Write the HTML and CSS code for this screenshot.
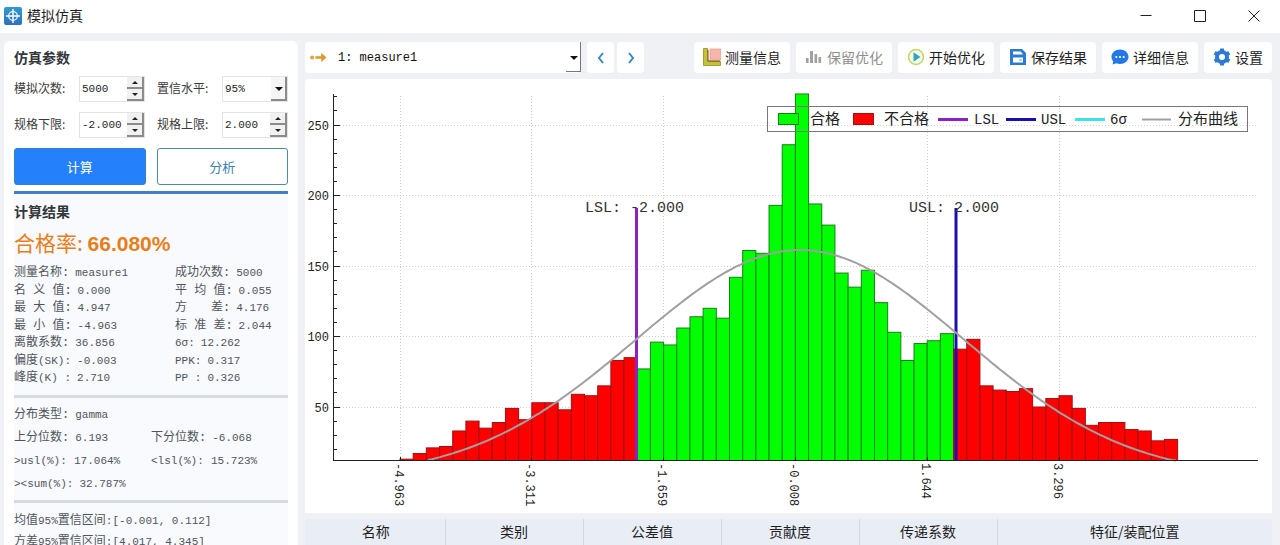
FILE: index.html
```html
<!DOCTYPE html>
<html lang="zh-CN">
<head>
<meta charset="utf-8">
<title>模拟仿真</title>
<link rel="stylesheet" href="styles.css">
</head>
<body>
<div class="app">
  <header class="titlebar">
    <svg class="logo" viewBox="0 0 18 18" aria-hidden="true">
      <defs><linearGradient id="lg" x1="0" y1="0" x2="0" y2="1"><stop offset="0" stop-color="#2f9bd0"/><stop offset="1" stop-color="#2f6fbe"/></linearGradient></defs>
      <rect width="18" height="18" rx="2" fill="url(#lg)"/>
      <circle cx="9" cy="9" r="4.3" fill="none" stroke="#e6f4ff" stroke-width="1.3"/>
      <path d="M9 2v14M2 9h14" stroke="#fff" stroke-width="1.4"/>
    </svg>
    <h1>模拟仿真</h1>
    <div class="window-buttons">
      <button aria-label="最小化"><svg viewBox="0 0 12 12"><path d="M.5 5.500h11"/></svg></button>
      <button aria-label="最大化"><svg viewBox="0 0 12 12"><path d="M.5.5h11v11H.5z"/></svg></button>
      <button aria-label="关闭"><svg viewBox="0 0 12 12"><path d="M.5.5l11 11M11.500.5l-11 11"/></svg></button>
    </div>
  </header>

  <div class="workspace">
    <aside class="sidebar">
      <h2>仿真参数</h2>
      <form class="params">
        <label for="runs">模拟次数:</label>
        <div class="spin"><input id="runs" type="text" value="5000"><div class="steps"><button type="button" class="up" aria-label="增加"></button><button type="button" class="down" aria-label="减少"></button></div></div>
        <label for="level">置信水平:</label>
        <div class="combo small"><select id="level"><option>95%</option></select></div>
        <label for="lower">规格下限:</label>
        <div class="spin"><input id="lower" type="text" value="-2.000"><div class="steps"><button type="button" class="up" aria-label="增加"></button><button type="button" class="down" aria-label="减少"></button></div></div>
        <label for="upper">规格上限:</label>
        <div class="spin"><input id="upper" type="text" value="2.000"><div class="steps"><button type="button" class="up" aria-label="增加"></button><button type="button" class="down" aria-label="减少"></button></div></div>
      </form>
      <div class="actions">
        <button class="primary">计算</button>
        <button class="outline">分析</button>
      </div>
      <section class="results">
        <h2>计算结果</h2>
        <p class="rate">合格率: <strong>66.080%</strong></p>
        <dl class="stats">
          <div><dt>测量名称:</dt><dd>measure1</dd></div><div><dt>成功次数:</dt><dd>5000</dd></div>
          <div><dt>名 义 值:</dt><dd>0.000</dd></div><div><dt>平 均 值:</dt><dd>0.055</dd></div>
          <div><dt>最 大 值:</dt><dd>4.947</dd></div><div><dt>方　　差:</dt><dd>4.176</dd></div>
          <div><dt>最 小 值:</dt><dd>-4.963</dd></div><div><dt>标 准 差:</dt><dd>2.044</dd></div>
          <div><dt>离散系数:</dt><dd>36.856</dd></div><div class="short"><dt><span class="mono">6σ:</span></dt><dd>12.262</dd></div>
          <div><dt>偏度<span class="mono">(SK):</span></dt><dd>-0.003</dd></div><div class="short"><dt><span class="mono">PPK:</span></dt><dd>0.317</dd></div>
          <div><dt>峰度<span class="mono">(K) :</span></dt><dd>2.710</dd></div><div class="short"><dt><span class="mono">PP :</span></dt><dd>0.326</dd></div>
        </dl>
        <hr>
        <dl class="quantiles">
          <div class="wide"><dt>分布类型:</dt><dd>gamma</dd></div>
          <div><dt>上分位数:</dt><dd>6.193</dd></div><div><dt>下分位数:</dt><dd>-6.068</dd></div>
          <div><dt><span class="mono">&gt;usl(%):</span></dt><dd>17.064%</dd></div><div><dt><span class="mono">&lt;lsl(%):</span></dt><dd>15.723%</dd></div>
          <div class="wide"><dt><span class="mono">&gt;&lt;sum(%):</span></dt><dd>32.787%</dd></div>
        </dl>
        <hr>
        <div class="intervals">
          <p>均值<span class="mono">95%</span>置信区间<span class="mono">:[-0.001, 0.112]</span></p>
          <p>方差<span class="mono">95%</span>置信区间<span class="mono">:[4.017, 4.345]</span></p>
        </div>
      </section>
    </aside>

    <main class="content">
      <div class="toolbar">
        <div class="combo large">
          <svg class="arrow" viewBox="0 0 16 12" aria-hidden="true"><circle cx="2" cy="6" r="1.900" fill="#e0a23c"/><path d="M5 6h8" stroke="#dd9a30" stroke-width="2.400"/><path d="M10.500 1.500L15.500 6l-5 4.500z" fill="#dd9a30"/></svg>
          <select aria-label="测量"><option>1: measure1</option></select>
        </div>
        <div class="pager">
          <button aria-label="上一个"><svg viewBox="0 0 8 12"><path d="M6 1L2 6l4 5"/></svg></button>
          <button aria-label="下一个"><svg viewBox="0 0 8 12"><path d="M2 1l4 5-4 5"/></svg></button>
        </div>
        <div class="tools">
          <button><svg viewBox="0 0 18 18"><rect x="7" y="1" width="11" height="11" fill="#f6b5a8" stroke="#e3a296" stroke-width=".8"/><path d="M.5.5h4v13h13v4H.5z" fill="#c3c13a" stroke="#a5a128"/><path d="M5 2v11h12" fill="none" stroke="#7b4a28" stroke-width="1"/></svg>测量信息</button>
          <button disabled><svg viewBox="0 0 18 18"><path d="M1 10h2.600v5H1zM5 3h3v12H5zM9.500 6h2.600v9H9.500zM13.500 9h2.600v6h-2.600z" fill="#a0a0a0"/></svg>保留优化</button>
          <button><svg viewBox="0 0 18 18"><circle cx="9" cy="9" r="7.400" fill="#f2fbf0" stroke="#c5d55c" stroke-width="1.500"/><path d="M6.500 4.200L13.500 9l-7 4.800z" fill="#36a3b4"/></svg>开始优化</button>
          <button><svg viewBox="0 0 18 18"><path d="M1 1h12l4 4v12H1z" fill="#2d7bd0"/><path d="M4 3.500h7.500l2 2v1H4zM4 9.500h10v5H4z" fill="#fff"/><path d="M10.500 11.500h2v1h-2z" fill="#2d7bd0"/></svg>保存结果</button>
          <button><svg viewBox="0 0 18 18"><path d="M9 1.500c4.800 0 8.500 3.200 8.500 7.300S13.800 16 9 16c-1.300 0-2.500-.2-3.600-.7L1.500 16.500l.8-3C1.100 12.200.5 10.600.5 8.800.5 4.700 4.200 1.500 9 1.500z" fill="#2278e6"/><g fill="#fff"><circle cx="5.300" cy="9" r="1.100"/><circle cx="9" cy="9" r="1.100"/><circle cx="12.700" cy="9" r="1.100"/></g></svg>详细信息</button>
          <button><svg viewBox="0 0 18 18"><circle cx="9" cy="9" r="5" fill="none" stroke="#2d7bd0" stroke-width="4"/><path d="M9 .5v3M9 14.500v3M1.700 4.800l2.500 1.400M13.800 11.800l2.500 1.400M1.700 13.200l2.500-1.400M13.800 6.200l2.500-1.400" stroke="#2d7bd0" stroke-width="4"/></svg>设置</button>
        </div>
      </div>

      <figure class="chart">
        <svg id="histogram" viewBox="305 79 967 434" role="img" aria-label="分布直方图">
          <g id="grid" class="grid"></g>
          <g id="bars" class="bars"></g>
          <g class="limits">
            <path class="lsl" d="M636.500 208V461"/>
            <path class="usl" d="M956 208V461"/>
          </g>
          <path id="curve" class="curve"/>
          <g id="axes" class="axes"><path d="M333.500 94V461M333 460.500H1258"/></g>
          <g class="limit-labels"><text x="585" y="212">LSL: -2.000</text><text x="909" y="212">USL: 2.000</text></g>
          <g class="legend">
            <rect class="frame" x="767.500" y="106.500" width="480" height="25"/>
            <rect class="pass" x="778.500" y="113.500" width="20" height="11"/><text class="han" x="810" y="124">合格</text>
            <rect class="fail" x="853.500" y="113.500" width="20" height="11"/><text class="han" x="884" y="124">不合格</text>
            <path class="lsl" d="M938 119.500h30"/><text x="974" y="124">LSL</text>
            <path class="usl" d="M1006 119.500h30"/><text x="1041" y="124">USL</text>
            <path class="sigma" d="M1075 119.500h30"/><text x="1110" y="124">6σ</text>
            <path class="curve" d="M1142 119.500h29"/><text class="han" x="1178" y="124">分布曲线</text>
          </g>
        </svg>
      </figure>

      <table class="contributors">
        <thead><tr><th>名称</th><th>类别</th><th>公差值</th><th>贡献度</th><th>传递系数</th><th class="last">特征/装配位置</th></tr></thead>
      </table>
    </main>
  </div>
</div>
<script src="chart.js"></script>
</body>
</html>
```
FILE: styles.css
```css
* { box-sizing: border-box; }

body {
  margin: 0;
  background: #eff1f5;
  color: #1e1e1e;
  font-family: "Noto Sans CJK SC", sans-serif;
  font-size: 14px;
}

h1, h2, p, dl, dd, figure { margin: 0; }
button, input, select { font: inherit; color: inherit; margin: 0; }
button { border: 0; padding: 0; }

.app {
  display: flex;
  flex-direction: column;
  height: 100vh;
  overflow: hidden;
}

.titlebar {
  display: flex;
  align-items: center;
  flex: none;
  gap: 5px;
  height: 33px;
  padding: 0 6px 2px 4px;
  background: #fff;
}
.logo { width: 18px; height: 18px; }
.titlebar h1 { font-size: 14px; font-weight: 400; line-height: 20px; padding-bottom: 2px; }
.window-buttons { display: flex; margin-left: auto; }
.window-buttons button { display: flex; align-items: center; justify-content: center; width: 54px; height: 31px; background: none; }
.window-buttons button:last-child { width: 40px; margin-left: 7px; }
.window-buttons svg { width: 12px; height: 12px; fill: none; stroke: #222; }

.workspace {
  display: flex;
  flex: 1;
  min-height: 0;
  gap: 7px;
  padding: 8px 8px 0 4px;
}

.sidebar {
  flex: none;
  width: 294px;
  padding: 6px 10px 0;
  background: #fff;
  border-radius: 6px 6px 0 0;
  overflow: hidden;
}
.sidebar h2 { font-size: 14px; font-weight: 700; line-height: 20px; color: #33363b; }

.params {
  display: grid;
  grid-template-columns: 65px 66px 77px 66px;
  row-gap: 10px;
  margin-top: 9px;
  align-items: center;
  font-size: 12px;
}
.params label { color: #3a3a3a; line-height: 18px; padding-bottom: 2px; }
.params label:nth-of-type(even) { padding-left: 12px; }

.spin, .combo {
  display: flex;
  position: relative;
  height: 26px;
  background: #fff;
  border: 1px solid #e3e4e6;
}
.spin input, .combo select {
  flex: 1;
  min-width: 0;
  width: 100%;
  padding: 0 0 0 2px;
  border: 0;
  outline: 0;
  appearance: none;
  background: none;
  font-family: "Liberation Mono", monospace;
  font-size: 11px;
}
.steps { display: flex; flex: none; flex-direction: column; width: 17px; }
.steps button {
  display: flex;
  flex: 1;
  align-items: center;
  justify-content: center;
  background: #f1f1f1;
  border-right: 2px solid #8b8b8b;
  border-bottom: 2px solid #8b8b8b;
}
.steps button::before { content: ""; border: 3px solid transparent; }
.steps .up::before { border-top: 0; border-bottom-color: #222; }
.steps .down::before { border-bottom: 0; border-top-color: #222; }

.combo::before {
  content: "";
  position: absolute;
  right: 0;
  top: 0;
  bottom: 0;
  width: 14px;
  background: #f6f6f6;
  border-right: 2px solid #8b8b8b;
  border-bottom: 2px solid #8b8b8b;
}
.combo::after {
  content: "";
  position: absolute;
  right: 4px;
  top: 50%;
  margin-top: -2px;
  border: 4px solid transparent;
  border-top-color: #111;
  border-bottom: 0;
  pointer-events: none;
}

.actions { display: grid; grid-template-columns: 1fr 1fr; gap: 11px; margin-top: 10px; }
.actions button { height: 37px; border-radius: 3px; font-size: 13px; }
.primary { background: #2481fb; color: #fff; border: 1px solid #3a7fc8; }
.outline { background: #fff; color: #3d7fae; border: 1px solid #5089a6; }

.results {
  margin-top: 6px;
  padding-top: 7px;
  border-top: 3px solid #437fc6;
  background: #f8fafd;
  font-size: 12px;
  color: #50555c;
}
.rate { color: #e67e1c; font-size: 21px; line-height: 28px; margin-top: 7px; }
.rate strong { font-family: "Liberation Sans", Arial, sans-serif; font-weight: 700; }

.mono, dd { font-family: "Liberation Mono", monospace; font-size: 11px; line-height: 1; }
dt { font-family: "Liberation Mono", "Noto Sans CJK SC", monospace; min-width: 60px; padding-right: 6px; }
.short dt { min-width: 0; }
.stats > div, .quantiles > div { display: flex; align-items: baseline; white-space: pre; line-height: 17px; }
.stats {
  display: grid;
  grid-template-columns: 161px 1fr;
  grid-auto-rows: 1fr;
  height: 123px;
  margin-top: 7px;
}
.results hr { height: 3px; margin: 7px 0 0; border: 0; background: #d7dae0; }
.quantiles { display: grid; grid-template-columns: 137px 1fr; row-gap: 6px; margin-top: 9px; }
.quantiles .wide { grid-column: 1 / -1; }
.intervals { margin-top: 5px; }
.intervals p { height: 21px; line-height: 21px; }

.content { display: flex; flex: 1; flex-direction: column; min-width: 0; }
.toolbar { display: flex; flex: none; align-items: center; height: 31px; margin: 1px 0 6px; }
.combo.large { flex: 0 1 276px; height: 31px; align-items: center; padding-left: 5px; border: 0; border-radius: 4px; }
.combo.large::before { background: #fff; border-color: #777; border-width: 1px; margin-bottom: 1px; }
.combo.large::after { right: 3px; }
.combo.large select { height: 31px; padding-left: 11px; font-size: 12px; color: #111; }
.arrow { flex: none; width: 17px; height: 13px; }
.pager { display: flex; gap: 3px; margin-left: 6px; }
.pager button { display: flex; align-items: center; justify-content: center; width: 27px; height: 31px; background: #fff; border-radius: 4px; }
.pager svg { width: 8px; height: 12px; fill: none; stroke: #3c86b8; stroke-width: 2; }
.tools { display: flex; gap: 6px; margin-left: auto; }
.tools button {
  display: flex;
  align-items: center;
  gap: 4px;
  height: 31px;
  padding: 0 9px 2px;
  background: #fff;
  border-radius: 4px;
  white-space: nowrap;
}
.tools button:disabled { color: #8f8f8f; }
.tools svg { width: 18px; height: 18px; }

.chart { flex: none; background: #fff; border-radius: 4px 4px 0 0; }
.chart > svg { display: block; width: 100%; height: auto; }
.chart text { font-family: "Liberation Mono", monospace; }
.grid path { stroke: #cfcfcf; stroke-dasharray: 1 2; fill: none; }
.bars rect { stroke-width: 1; }
.pass { fill: #00ff00; stroke: #168016; }
.fail { fill: #ff0000; stroke: #a01010; }
.lsl { stroke: #8a22c4; stroke-width: 3; }
.usl { stroke: #1a10b0; stroke-width: 3; }
.sigma { stroke: #3fe0e6; stroke-width: 3; }
.curve { stroke: #a0a0a0; stroke-width: 2; fill: none; }
.axes path { stroke: #222; fill: none; }
.axes text { font-size: 12px; fill: #222; }
.limit-labels text { font-size: 15px; fill: #333; }
.legend .frame { fill: none; stroke: #777; }
.legend text { font-size: 14px; fill: #222; }
.legend .han { font-family: "Noto Sans CJK SC", sans-serif; font-size: 15px; }

.contributors {
  flex: none;
  width: 100%;
  margin-top: 6px;
  border-collapse: collapse;
  table-layout: fixed;
  background: #e9edf5;
}
.contributors th {
  width: 138px;
  height: 26px;
  padding: 0 0 2px;
  border-left: 1px solid #d3d7df;
  font-weight: 400;
  line-height: 20px;
}
.contributors th:first-child { width: 140px; padding-left: 2px; border-left: 0; }
.contributors .last { width: auto; }
```
FILE: chart.js
```js
const counts = [
  13, 17, 21, 22, 33, 40, 35, 39, 49, 41, 53, 53, 48, 59, 58, 65, 83, 85,
  77, 96, 94, 106, 114, 120, 113, 142, 161, 159, 193, 236, 272, 194, 179,
  145, 135, 147, 124, 103, 83, 95, 97, 102,
  91, 98, 65, 62, 61, 63, 50, 56, 58, 49, 37, 39, 39, 34, 33, 26, 27
];
const passRange = [18, 41];
const left = 400, step = 13.18, base = 460.5;
const yOf = count => 407 - (count - 50) * 1.41;

function add(parent, name, attrs, text) {
  const el = document.createElementNS("http://www.w3.org/2000/svg", name);
  for (const key in attrs) el.setAttribute(key, attrs[key]);
  if (text) el.textContent = text;
  document.getElementById(parent).appendChild(el);
}

counts.forEach((count, i) => {
  const pass = i >= passRange[0] && i <= passRange[1];
  add("bars", "rect", {
    x: left + i * step, y: yOf(count), width: step, height: base - yOf(count),
    class: pass ? "pass" : "fail"
  });
});

for (let count = 20; count <= 270; count += 10) {
  const major = count % 50 === 0;
  const y = Math.floor(yOf(count)) + 0.5;
  add("axes", "path", { d: `M334 ${y}h${major ? 6 : 3}` });
  if (major) {
    add("grid", "path", { d: `M340 ${y}H1257` });
    add("axes", "text", { x: 329, y: y + 4, "text-anchor": "end" }, String(count));
  }
}

["-4.963", "-3.311", "-1.659", "-0.008", "1.644", "3.296"].forEach((label, i) => {
  const x = Math.floor(left + i * step * 10) + 0.5;
  add("grid", "path", { d: `M${x} 96V461` });
  add("axes", "path", { d: `M${x} 457v4` });
  add("axes", "text", { transform: `translate(${x - 6} 463) rotate(90)` }, label);
});

let d = "";
for (let x = 428; x <= 1176; x += 4) {
  const y = yOf(161.3 * Math.exp(-((x - 800) ** 2) / (2 * 164 ** 2)));
  d += `${d ? "L" : "M"}${x} ${Math.min(y, base).toFixed(1)}`;
}
document.getElementById("curve").setAttribute("d", d);
```
